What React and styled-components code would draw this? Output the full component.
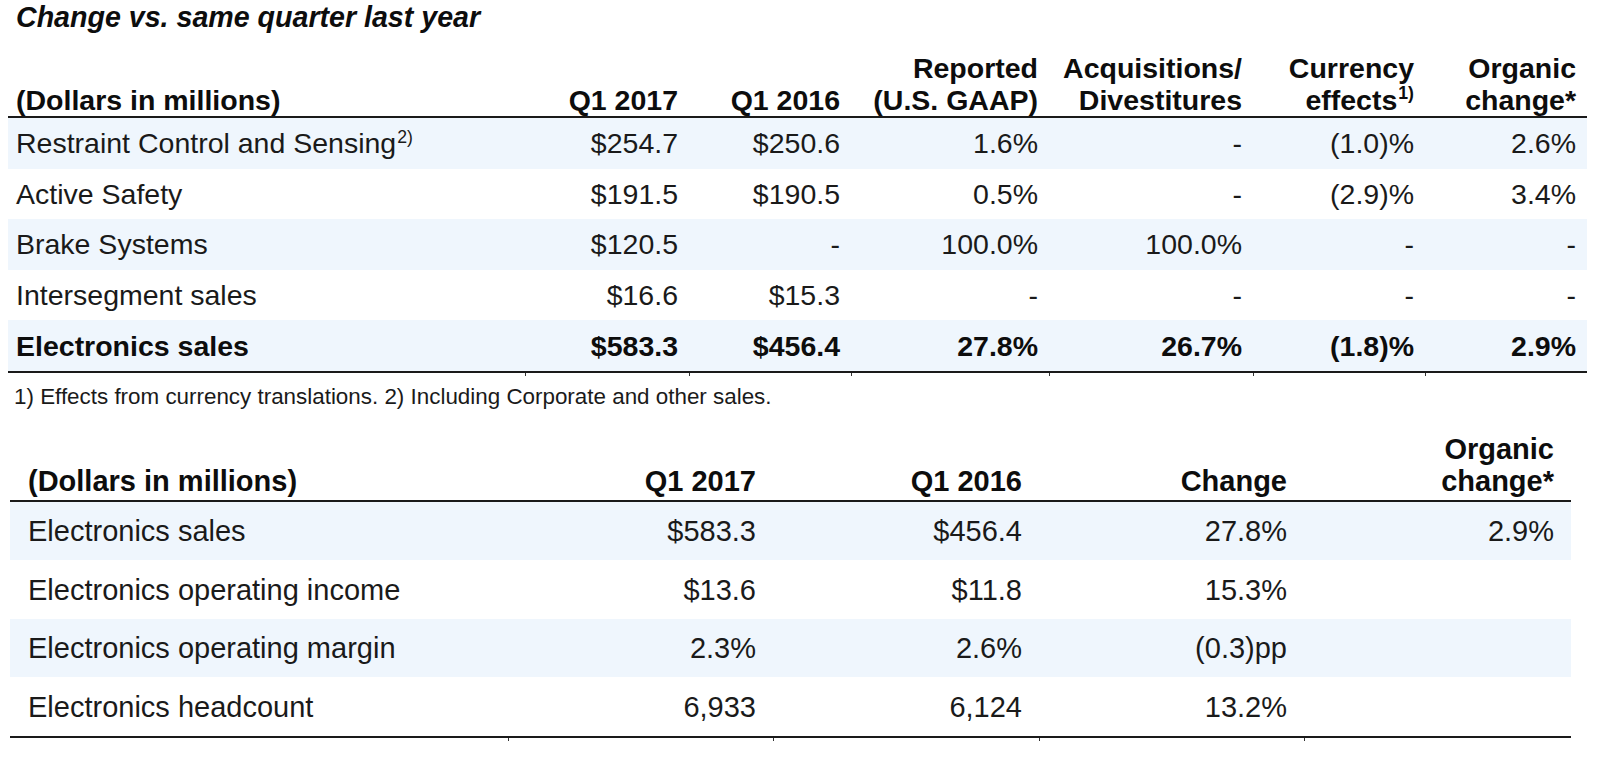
import React from 'react';
import styled, { createGlobalStyle } from 'styled-components';

const GlobalStyle = createGlobalStyle`
  body {
    margin: 0;
    background: #ffffff;
  }
`;

const segments = [
    { name: 'Restraint Control and Sensing', note: '2)', vals: ['$254.7', '$250.6', '1.6%', '-', '(1.0)%', '2.6%'] },
    { name: 'Active Safety', vals: ['$191.5', '$190.5', '0.5%', '-', '(2.9)%', '3.4%'] },
    { name: 'Brake Systems', vals: ['$120.5', '-', '100.0%', '100.0%', '-', '-'] },
    { name: 'Intersegment sales', vals: ['$16.6', '$15.3', '-', '-', '-', '-'] },
    { name: 'Electronics sales', bold: true, vals: ['$583.3', '$456.4', '27.8%', '26.7%', '(1.8)%', '2.9%'] },
];

const summary = [
    { name: 'Electronics sales', vals: ['$583.3', '$456.4', '27.8%', '2.9%'] },
    { name: 'Electronics operating income', vals: ['$13.6', '$11.8', '15.3%', ''] },
    { name: 'Electronics operating margin', vals: ['2.3%', '2.6%', '(0.3)pp', ''] },
    { name: 'Electronics headcount', vals: ['6,933', '6,124', '13.2%', ''] },
];

const segmentCols = [517, 164, 162, 198, 204, 172, 162];
const summaryCols = [498, 265, 266, 265, 267];

function App() {
    return (
        <Page>
            <GlobalStyle />
            <Title>Change vs. same quarter last year</Title>

            <Table $offset={0} $width={1579} $pad={11} $first={8} $size={28.5}>
                <colgroup>
                    {segmentCols.map((w, i) => <Col key={i} $w={w} />)}
                </colgroup>
                <thead>
                    <tr>
                        <HeadCell>(Dollars in millions)</HeadCell>
                        <HeadCell>Q1 2017</HeadCell>
                        <HeadCell>Q1 2016</HeadCell>
                        <HeadCell>Reported<br />(U.S. GAAP)</HeadCell>
                        <HeadCell>Acquisitions/<br />Divestitures</HeadCell>
                        <HeadCell>Currency<br />effects<Sup>1)</Sup></HeadCell>
                        <HeadCell>Organic<br />change*</HeadCell>
                    </tr>
                </thead>
                <tbody>
                    {segments.map((row, i) => (
                        <Row key={row.name} $shaded={i % 2 === 0} $bold={row.bold} $height={50.6} $last={i === segments.length - 1}>
                            <td>
                                {row.name}
                                {row.note && <Sup>{row.note}</Sup>}
                            </td>
                            {row.vals.map((v, j) => (
                                <td key={j}>{v}</td>
                            ))}
                        </Row>
                    ))}
                    <TickRow>
                        {segmentCols.map((_, i) => <td key={i} />)}
                    </TickRow>
                </tbody>
            </Table>

            <Footnote>1) Effects from currency translations. 2) Including Corporate and other sales.</Footnote>

            <Table $offset={2} $width={1561} $pad={17} $first={18} $top={24} $size={29}>
                <colgroup>
                    {summaryCols.map((w, i) => <Col key={i} $w={w} />)}
                </colgroup>
                <thead>
                    <tr>
                        <HeadCell $gap={3}>(Dollars in millions)</HeadCell>
                        <HeadCell $gap={3}>Q1 2017</HeadCell>
                        <HeadCell $gap={3}>Q1 2016</HeadCell>
                        <HeadCell $gap={3}>Change</HeadCell>
                        <HeadCell $gap={3}>Organic<br />change*</HeadCell>
                    </tr>
                </thead>
                <tbody>
                    {summary.map((row, i) => (
                        <Row key={row.name} $shaded={i % 2 === 0} $height={58.5} $last={i === summary.length - 1}>
                            <td>{row.name}</td>
                            {row.vals.map((v, j) => (
                                <td key={j}>{v}</td>
                            ))}
                        </Row>
                    ))}
                    <TickRow>
                        {summaryCols.map((_, i) => <td key={i} />)}
                    </TickRow>
                </tbody>
            </Table>
        </Page>
    );
}

const Page = styled.div`
    padding: 1px 0 0 8px;
    font-family: "Liberation Sans", Arial, sans-serif;
    color: #111111;
`;

const Title = styled.h1`
    margin: 0 0 19px 8px;
    font-size: 28.6px;
    line-height: 32px;
    font-weight: 700;
    font-style: italic;
    color: #0d0d0d;
`;

const Table = styled.table`
    width: ${p => p.$width}px;
    margin: ${p => p.$top || 0}px 0 0 ${p => p.$offset}px;
    border-collapse: separate;
    border-spacing: 0;
    table-layout: fixed;
    font-size: ${p => p.$size}px;

    th, td {
        padding: 0 ${p => p.$pad}px 0 0;
        text-align: right;
        white-space: nowrap;
    }
    th:first-child, td:first-child {
        padding-left: ${p => p.$first}px;
        text-align: left;
    }
`;

const Col = styled.col`
    width: ${p => p.$w}px;
`;

const HeadCell = styled.th`
    vertical-align: bottom;
    font-weight: 700;
    line-height: 32px;
    color: #0d0d0d;
    border-bottom: 2px solid #1a1a1a;
    && {
        padding-bottom: ${p => p.$gap || 0}px;
    }
`;

const Row = styled.tr`
    td {
        height: ${p => p.$height}px;
        background: ${p => (p.$shaded ? '#eff6fd' : '#ffffff')};
        font-weight: ${p => (p.$bold ? 700 : 400)};
        color: ${p => (p.$bold ? '#0d0d0d' : '#1a1a1a')};
        vertical-align: middle;
        line-height: 32px;
        border-bottom: ${p => (p.$last ? '2px solid #1a1a1a' : 'none')};
    }
`;

const TickRow = styled.tr`
    td {
        height: 3px;
        line-height: 0;
        font-size: 0;
    }
    td + td {
        border-left: 1px solid #333333;
    }
`;

const Sup = styled.sup`
    font-size: 0.62em;
    line-height: 0;
    vertical-align: 0.6em;
    margin-left: 1px;
`;

const Footnote = styled.p`
    margin: 8px 0 0 6px;
    font-size: 22.4px;
    line-height: 25px;
    color: #1a1a1a;
`;

export default App;
